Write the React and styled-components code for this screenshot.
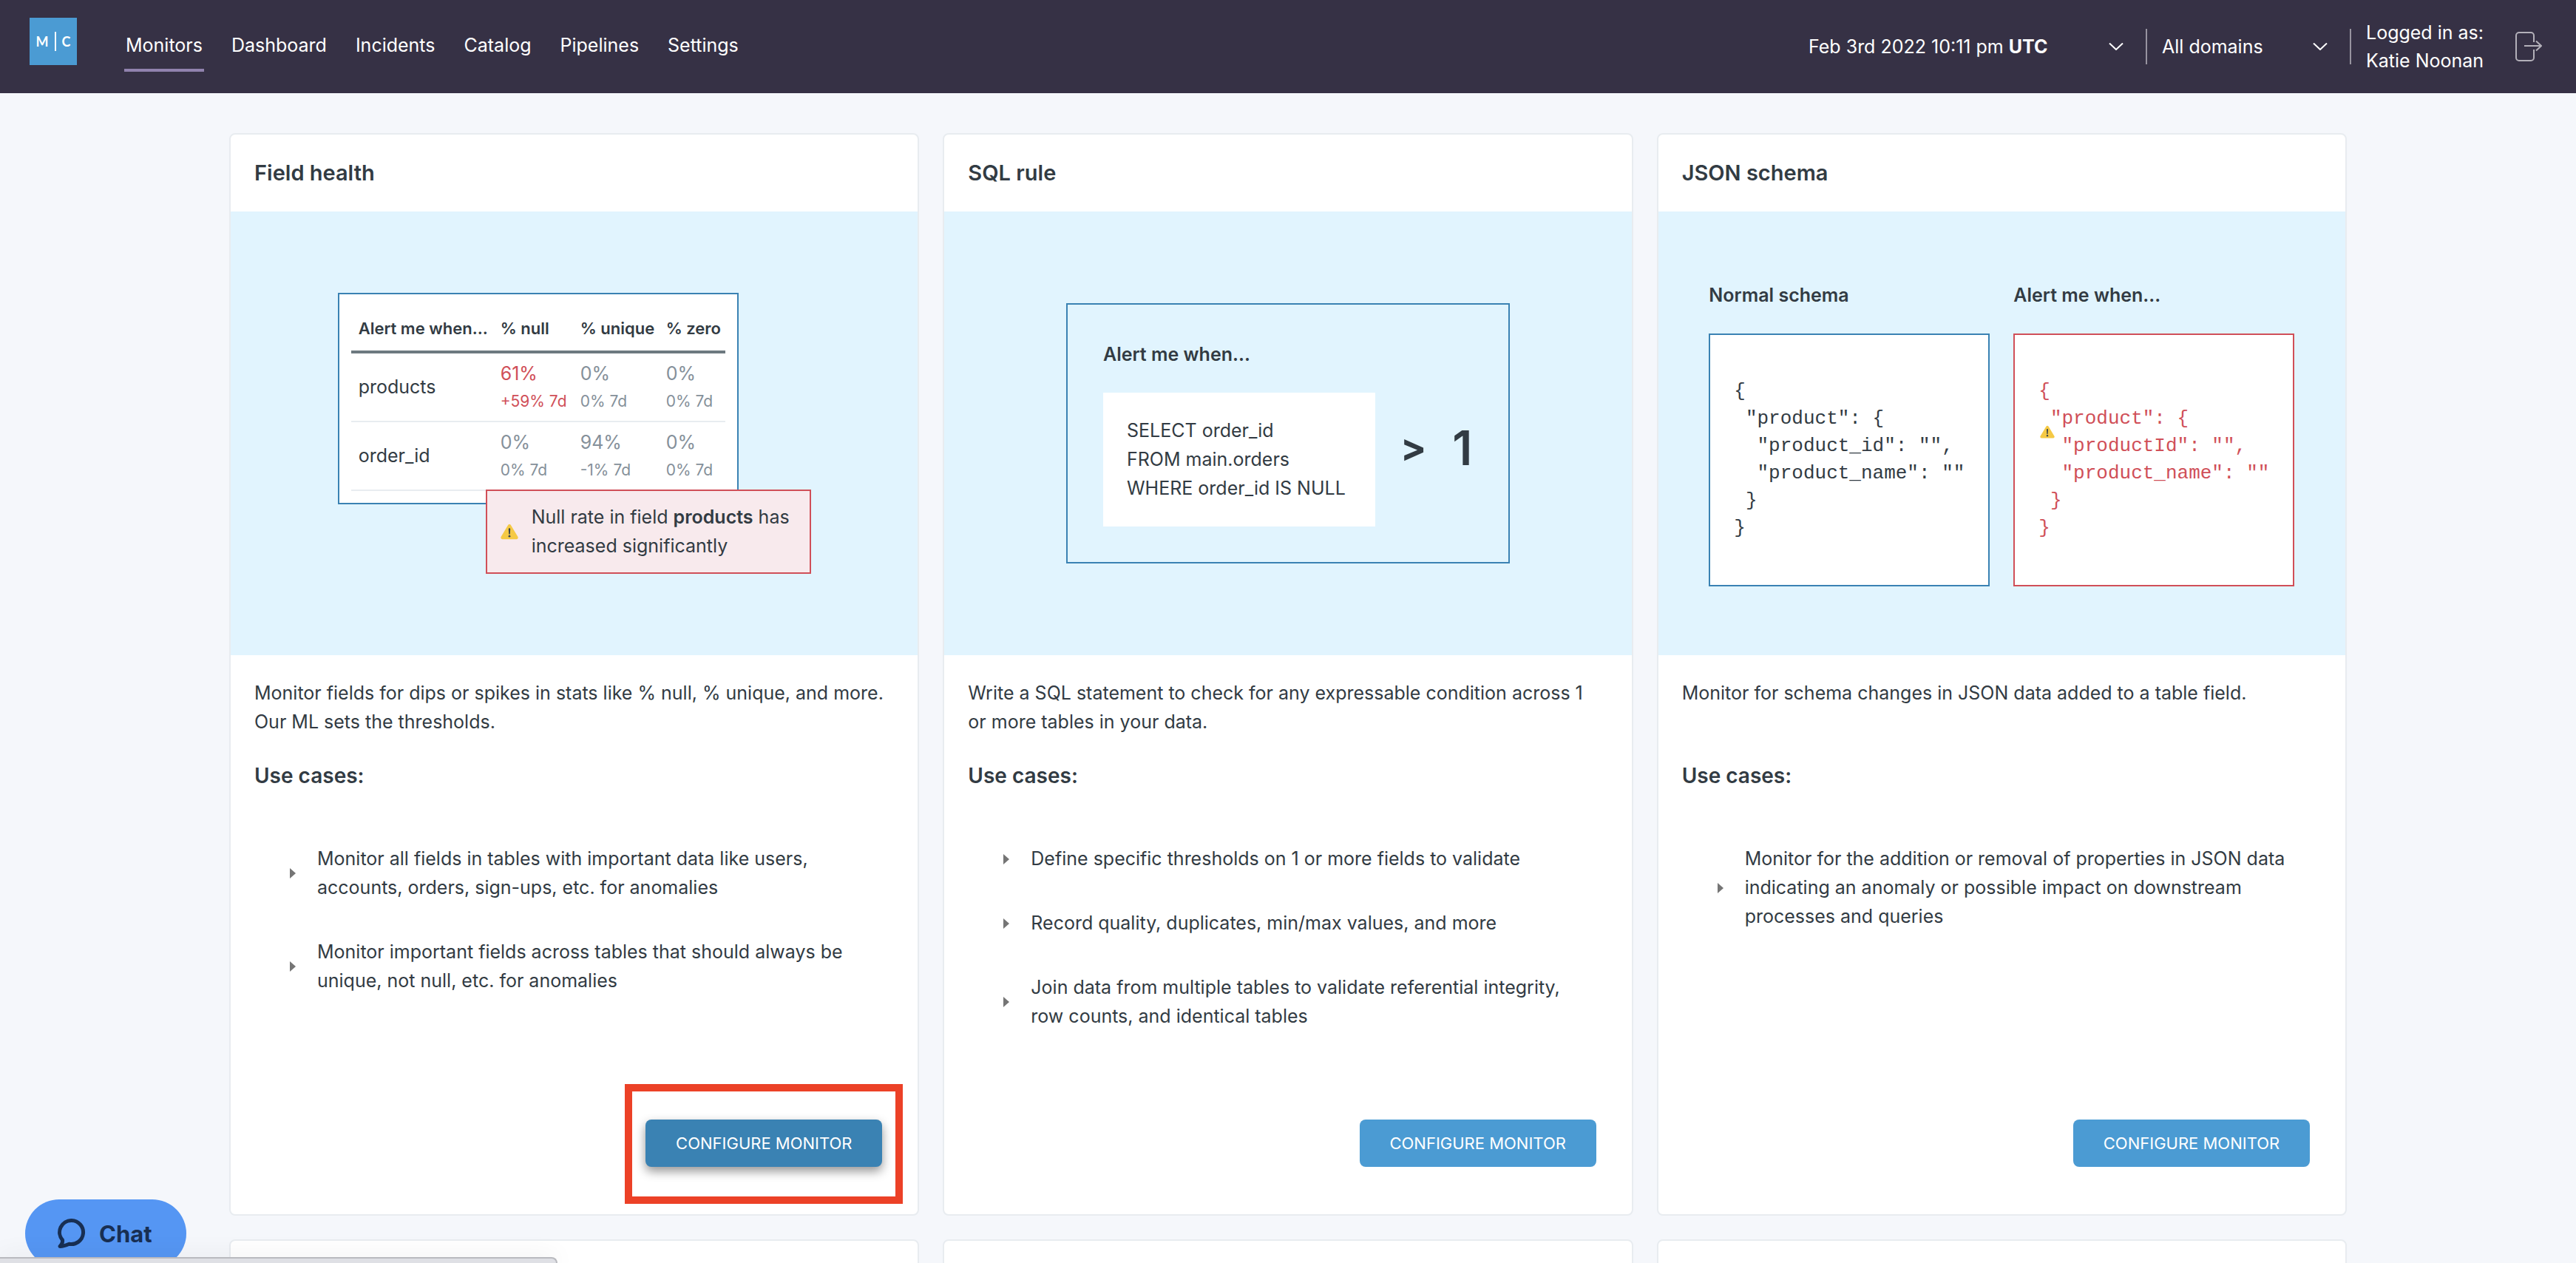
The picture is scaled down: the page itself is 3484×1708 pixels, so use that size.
import React from "react";
import styled, { createGlobalStyle } from "styled-components";

const color = {
  ink: "#323b43",
  muted: "#85909a",
  header: "#363145",
  page: "#f5f7fb",
  border: "#e8ecf0",
  sky: "#e1f4fe",
  blue: "#4b9bd3",
  blueDark: "#3a82b3",
  red: "#d04f58",
  redSoft: "#f8eaed",
};

const GlobalStyle = createGlobalStyle`
  *, *::before, *::after { box-sizing: border-box; }
  body {
    margin: 0;
    background: ${color.page};
    color: ${color.ink};
    font: 400 25px/39px Inter, "Open Sans", sans-serif;
  }
  h2, h3, p, ul, pre { margin: 0; padding: 0; }
  button, select { font: inherit; }
`;

const Shell = styled.div`
  height: 100vh;
  overflow: hidden;
`;

/* ---------- header ---------- */

const Header = styled.header`
  display: flex;
  align-items: center;
  justify-content: space-between;
  min-height: 126px;
  padding: 0 46px 0 40px;
  background: ${color.header};
  color: #fff;
`;

const HeaderSide = styled.div`
  display: flex;
  align-items: center;
  gap: ${(p) => p.$gap}px;
`;

const Logo = styled.a`
  display: flex;
  align-items: center;
  justify-content: center;
  gap: 8px;
  width: 64px;
  height: 64px;
  margin-bottom: 14px;
  background: ${color.blue};
  color: #fff;
  font: 700 18px/24px Lato, sans-serif;
  text-decoration: none;
`;

const LogoBar = styled.span`
  width: 2px;
  height: 26px;
  background: #fff;
`;

const Nav = styled.nav`
  display: flex;
  gap: 35px;
`;

const NavLink = styled.a`
  padding: 12px 2px;
  border-bottom: 4px solid ${(p) => (p.$active ? "#9182ae" : "transparent")};
  color: #fff;
  text-decoration: none;
`;

const Divider = styled.span`
  width: 2px;
  height: 48px;
  margin: 0 20px 0 30px;
  background: #97939f;
`;

const DateButton = styled.button`
  display: flex;
  align-items: center;
  justify-content: space-between;
  width: 426px;
  padding: 0;
  border: 0;
  background: none;
  color: #fff;
`;

const SelectWrap = styled.label`
  display: grid;
  grid-template-columns: 1fr 20px;
  align-items: center;
  width: 224px;

  svg {
    grid-area: 1 / 2;
    pointer-events: none;
  }
`;

const Select = styled.select`
  grid-area: 1 / 1 / 2 / 3;
  padding: 0;
  border: 0;
  background: none;
  color: #fff;
  appearance: none;
`;

const User = styled.div`
  width: 172px;
  margin-right: 30px;
  line-height: 38px;
  white-space: nowrap;
`;

const IconButton = styled.button`
  display: flex;
  padding: 0;
  border: 0;
  background: none;
`;

/* ---------- cards ---------- */

const Grid = styled.main`
  display: grid;
  grid-template-columns: repeat(3, 1fr);
  gap: 32px;
  max-width: 2864px;
  margin: 54px auto 0;
`;

const Card = styled.article`
  display: flex;
  flex-direction: column;
  min-height: 104px;
  border: 2px solid ${color.border};
  border-radius: 8px;
  background: #fff;
`;

const CardTitle = styled.h2`
  padding: 31px 32px;
  font-size: 29px;
  font-weight: 600;
  line-height: 42px;
`;

const Illustration = styled.div`
  display: flex;
  align-items: center;
  justify-content: center;
  height: 600px;
  background: ${color.sky};
`;

const CardBody = styled.div`
  display: flex;
  flex: 1;
  flex-direction: column;
  padding: 32px;
`;

const Description = styled.p`
  min-height: 78px;
  padding-right: 8px;
`;

const UseCases = styled.h3`
  margin-top: 32px;
  font-size: 28px;
  font-weight: 600;
  line-height: 42px;
`;

const CaseList = styled.ul`
  margin: 48px 0;
  list-style: none;
`;

const CaseItem = styled.li`
  display: flex;
  align-items: center;
  gap: 29px;
  padding: 24px 32px 24px 48px;

  &::before {
    content: "";
    flex: none;
    border: solid transparent;
    border-width: 7px 0 7px 8px;
    border-left-color: #757575;
  }
`;

const CardFooter = styled.footer`
  display: flex;
  justify-content: flex-end;
  margin-top: auto;
  padding: 48px 16px 32px;
`;

const ButtonSlot = styled.div`
  position: relative;
`;

const Highlight = styled.span`
  position: absolute;
  inset: -48px -28px -50px;
  border: 10px solid #ec4127;
  pointer-events: none;
`;

const ConfigureButton = styled.button`
  display: block;
  width: 320px;
  height: 64px;
  padding: 0;
  border: 0;
  border-radius: 8px;
  background: ${(p) => (p.$raised ? color.blueDark : color.blue)};
  box-shadow: ${(p) => (p.$raised ? "0 6px 14px rgba(0, 0, 0, 0.42)" : "none")};
  color: #fff;
  font-size: 22px;
`;

/* ---------- field health illustration ---------- */

const FieldHealth = styled.div`
  display: flex;
  flex-direction: column;
  width: 640px;
`;

const TablePanel = styled.div`
  width: 542px;
  padding: 16px;
  border: 2px solid ${color.blueDark};
  background: #fff;
`;

const StatsTable = styled.table`
  width: 100%;
  border-spacing: 0;
  table-layout: fixed;
  text-align: left;
  white-space: nowrap;
`;

const HeadCell = styled.th`
  width: ${(p) => p.$width}px;
  height: 64px;
  padding: 0 0 0 10px;
  border-bottom: 4px solid #6d7980;
  font-size: 22px;
  font-weight: 600;
`;

const RowHead = styled.th`
  padding: 8px 0 8px 10px;
  border-bottom: 2px solid ${color.border};
  font-weight: 400;
`;

const Cell = styled.td`
  padding: 8px 0 8px 10px;
  border-bottom: 2px solid ${color.border};
  color: ${(p) => (p.$alert ? color.red : color.muted)};
`;

const Delta = styled.div`
  font-size: 21px;
  line-height: 36px;
`;

const Alert = styled.div`
  position: relative;
  display: flex;
  align-items: center;
  align-self: flex-end;
  gap: 18px;
  width: 440px;
  margin-top: -20px;
  padding: 16px 0 16px 18px;
  border: 2px solid ${color.red};
  background: ${color.redSoft};

  strong { font-weight: 600; }
`;

/* ---------- SQL illustration ---------- */

const SqlPanel = styled.div`
  width: 600px;
  padding: 48px;
  border: 2px solid ${color.blueDark};
`;

const Label = styled.div`
  font-weight: 600;
`;

const SqlRow = styled.div`
  display: flex;
  align-items: center;
  margin-top: 32px;
`;

const SqlBox = styled.pre`
  flex: none;
  width: 368px;
  padding: 32px;
  background: #fff;
  font-family: inherit;
`;

const Comparison = styled.div`
  display: flex;
  align-items: center;
  padding: 0 0 32px 34px;
  gap: 35px;
`;

const Operator = styled.span`
  font-size: 52px;
  font-weight: 700;
`;

const Threshold = styled.span`
  font-size: 64px;
  font-weight: 600;
`;

/* ---------- JSON illustration ---------- */

const Schemas = styled.div`
  display: flex;
  gap: 32px;
`;

const CodePanel = styled.div`
  position: relative;
  width: 380px;
  margin-top: 32px;
  padding: 58px 32px;
  border: 2px solid ${(p) => (p.$alert ? color.red : color.blueDark)};
  background: #fff;
  color: ${(p) => (p.$alert ? color.red : color.ink)};
`;

const Code = styled.pre`
  font: 400 26px/37px "Liberation Mono", monospace;
`;

const CodeWarning = styled.span`
  position: absolute;
  top: 121px;
  left: 34px;
  display: flex;
`;

/* ---------- overlays ---------- */

const ChatButton = styled.button`
  position: fixed;
  bottom: -6px;
  left: 34px;
  display: flex;
  align-items: center;
  gap: 18px;
  width: 218px;
  height: 92px;
  padding: 0 0 0 44px;
  border: 0;
  border-radius: 46px;
  background: #5596f3;
  color: #182f53;
  font-size: 31px;
  font-weight: 700;
`;

const StatusBar = styled.div`
  position: fixed;
  bottom: 0;
  left: 0;
  width: 754px;
  height: 8px;
  border-top: 2px solid #b9babf;
  border-right: 2px solid #b9babf;
  border-radius: 0 8px 0 0;
  background: #dfe0e5;
  box-shadow: 0 0 32px rgba(0, 0, 0, 0.12);
`;

/* ---------- icons ---------- */

const Chevron = () => (
  <svg width="20" height="10" viewBox="0 0 20 10" fill="none" stroke="#fff" strokeWidth="2" aria-hidden="true">
    <path d="M1 0.5 10 9 19 0.5" />
  </svg>
);

const LogoutIcon = () => (
  <svg width="36" height="40" viewBox="0 0 36 40" fill="none" stroke="#b3b0b9" strokeWidth="2" aria-hidden="true">
    <path d="M25 14V5a4 4 0 0 0-4-4H5a4 4 0 0 0-4 4v30a4 4 0 0 0 4 4h16a4 4 0 0 0 4-4V24M12 19h23M28 12.500l7 6.500-7 6.500" />
  </svg>
);

const WarningIcon = ({ size }) => (
  <svg width={size} height={size} viewBox="0 0 24 24" aria-hidden="true">
    <path d="M10 3.200a2.300 2.300 0 0 1 4 0l9.300 15.600a2.300 2.300 0 0 1-2 3.500H2.700a2.300 2.300 0 0 1-2-3.500z" fill="#f5c945" />
    <path d="M10.800 8.500a1.200 1.200 0 0 1 2.400 0l-.4 6.500a.8.8 0 0 1-1.600 0z" fill="#37424a" />
    <circle cx="12" cy="18.200" r="1.400" fill="#37424a" />
  </svg>
);

const ChatIcon = () => (
  <svg width="38" height="40" viewBox="0 0 38 40" fill="none" stroke="#182f53" strokeWidth="5" strokeLinejoin="round" aria-hidden="true">
    <path d="M19 2.500a16 16 0 1 1-3.500 31.700C11.500 36 7 37.500 3 37.400c2.500-2.500 4-5.500 3.500-8.400A16 16 0 0 1 19 2.500z" />
  </svg>
);

/* ---------- content ---------- */

const navItems = ["Monitors", "Dashboard", "Incidents", "Catalog", "Pipelines", "Settings"];

const columns = [
  ["Alert me when...", 192],
  ["% null", 108],
  ["% unique", 116],
  ["% zero", 90],
];

const stats = [
  { name: "products", cells: [["61%", "+59% 7d", true], ["0%", "0% 7d"], ["0%", "0% 7d"]] },
  { name: "order_id", cells: [["0%", "0% 7d"], ["94%", "-1% 7d"], ["0%", "0% 7d"]] },
];

const FieldHealthArt = () => (
  <FieldHealth>
    <TablePanel>
      <StatsTable>
        <thead>
          <tr>
            {columns.map(([name, width]) => (
              <HeadCell key={name} scope="col" $width={width}>{name}</HeadCell>
            ))}
          </tr>
        </thead>
        <tbody>
          {stats.map((row) => (
            <tr key={row.name}>
              <RowHead scope="row">{row.name}</RowHead>
              {row.cells.map(([value, delta, alert], i) => (
                <Cell key={i} $alert={alert}>
                  {value}
                  <Delta>{delta}</Delta>
                </Cell>
              ))}
            </tr>
          ))}
        </tbody>
      </StatsTable>
    </TablePanel>
    <Alert>
      <WarningIcon size={24} />
      <p>
        Null rate in field <strong>products</strong> has
        <br />
        increased significantly
      </p>
    </Alert>
  </FieldHealth>
);

const SqlArt = () => (
  <SqlPanel>
    <Label>Alert me when...</Label>
    <SqlRow>
      <SqlBox>{"SELECT order_id\nFROM main.orders\nWHERE order_id IS NULL"}</SqlBox>
      <Comparison>
        <Operator>&gt;</Operator>
        <Threshold>1</Threshold>
      </Comparison>
    </SqlRow>
  </SqlPanel>
);

const schemaCode = (idField) =>
  `{\n "product": {\n  "${idField}": "",\n  "product_name": ""\n }\n}`;

const JsonArt = () => (
  <Schemas>
    <div>
      <Label>Normal schema</Label>
      <CodePanel>
        <Code>{schemaCode("product_id")}</Code>
      </CodePanel>
    </div>
    <div>
      <Label>Alert me when...</Label>
      <CodePanel $alert>
        <CodeWarning>
          <WarningIcon size={20} />
        </CodeWarning>
        <Code>{schemaCode("productId")}</Code>
      </CodePanel>
    </div>
  </Schemas>
);

const monitors = [
  {
    title: "Field health",
    Art: FieldHealthArt,
    description: "Monitor fields for dips or spikes in stats like % null, % unique, and more. Our ML sets the thresholds.",
    cases: [
      "Monitor all fields in tables with important data like users, accounts, orders, sign-ups, etc. for anomalies",
      "Monitor important fields across tables that should always be unique, not null, etc. for anomalies",
    ],
    highlighted: true,
  },
  {
    title: "SQL rule",
    Art: SqlArt,
    description: "Write a SQL statement to check for any expressable condition across 1 or more tables in your data.",
    cases: [
      "Define specific thresholds on 1 or more fields to validate",
      "Record quality, duplicates, min/max values, and more",
      "Join data from multiple tables to validate referential integrity, row counts, and identical tables",
    ],
  },
  {
    title: "JSON schema",
    Art: JsonArt,
    description: "Monitor for schema changes in JSON data added to a table field.",
    cases: [
      "Monitor for the addition or removal of properties in JSON data indicating an anomaly or possible impact on downstream processes and queries",
    ],
  },
];

const MonitorCard = ({ title, Art, description, cases, highlighted }) => (
  <Card>
    <CardTitle>{title}</CardTitle>
    <Illustration>
      <Art />
    </Illustration>
    <CardBody>
      <Description>{description}</Description>
      <UseCases>Use cases:</UseCases>
      <CaseList>
        {cases.map((text) => (
          <CaseItem key={text}>{text}</CaseItem>
        ))}
      </CaseList>
      <CardFooter>
        <ButtonSlot>
          <ConfigureButton type="button" $raised={highlighted}>CONFIGURE MONITOR</ConfigureButton>
          {highlighted && <Highlight />}
        </ButtonSlot>
      </CardFooter>
    </CardBody>
  </Card>
);

export default function App() {
  return (
    <Shell>
      <GlobalStyle />
      <Header>
        <HeaderSide $gap={64}>
          <Logo href="#">
            M<LogoBar />C
          </Logo>
          <Nav>
            {navItems.map((item, i) => (
              <NavLink key={item} href="#" $active={i === 0}>{item}</NavLink>
            ))}
          </Nav>
        </HeaderSide>
        <HeaderSide $gap={0}>
          <DateButton type="button">
            <span>Feb 3rd 2022 10:11 pm <b>UTC</b></span>
            <Chevron />
          </DateButton>
          <Divider />
          <SelectWrap>
            <Select aria-label="Domains">
              <option>All domains</option>
            </Select>
            <Chevron />
          </SelectWrap>
          <Divider />
          <User>
            <div>Logged in as:</div>
            <div>Katie Noonan</div>
          </User>
          <IconButton type="button" aria-label="Log out">
            <LogoutIcon />
          </IconButton>
        </HeaderSide>
      </Header>
      <Grid>
        {monitors.map((monitor) => (
          <MonitorCard key={monitor.title} {...monitor} />
        ))}
        <Card />
        <Card />
        <Card />
      </Grid>
      <ChatButton type="button">
        <ChatIcon />
        Chat
      </ChatButton>
      <StatusBar />
    </Shell>
  );
}
